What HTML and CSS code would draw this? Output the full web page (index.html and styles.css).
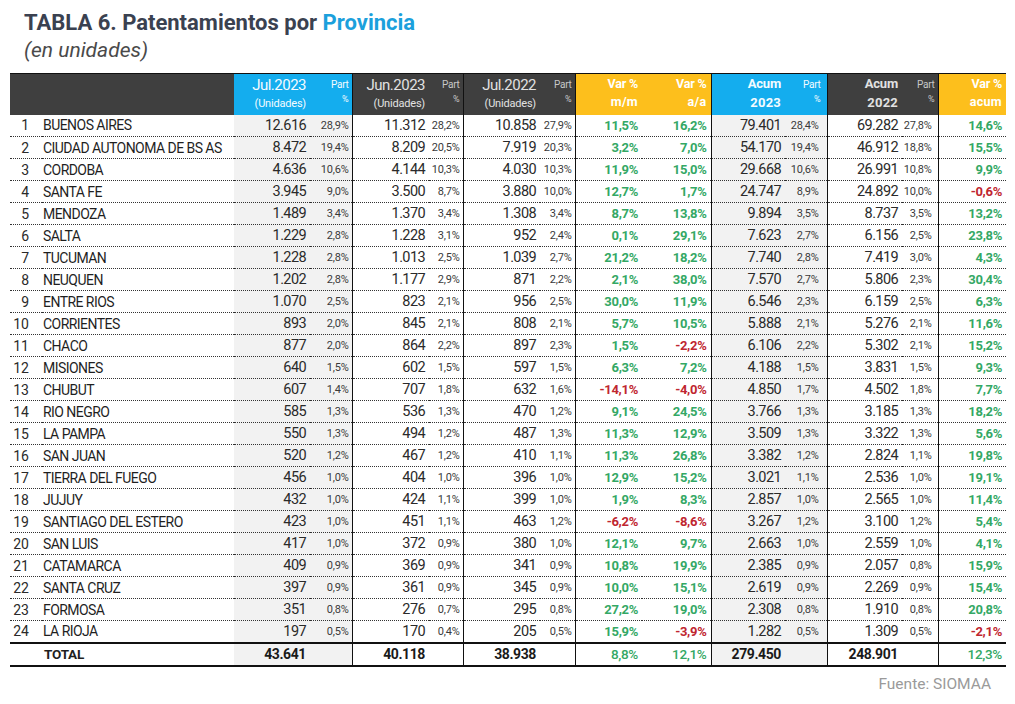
FILE: index.html
```html
<!DOCTYPE html>
<html lang="es">
<head>
<meta charset="utf-8">
<title>TABLA 6. Patentamientos por Provincia</title>
<link rel="stylesheet" href="styles.css">
</head>
<body>
<div class="page">
  <header class="heading">
    <h1 class="title">TABLA 6. Patentamientos por <span class="accent">Provincia</span></h1>
    <p class="subtitle">(en unidades)</p>
  </header>
  <table class="grid">
    <colgroup>
      <col class="c-idx"><col class="c-name">
      <col class="c-v1"><col class="c-p1">
      <col class="c-v2"><col class="c-p2">
      <col class="c-v3"><col class="c-p3">
      <col class="c-mm"><col class="c-aa">
      <col class="c-v4"><col class="c-p4">
      <col class="c-v5"><col class="c-p5">
      <col class="c-ac">
    </colgroup>
    <thead>
      <tr>
        <th class="hd dark"></th>
        <th class="hd dark"></th>
        <th class="hd blue val"><div class="l1">Jul.2023</div><div class="l2">(Unidades)</div></th>
        <th class="hd blue part"><div class="p1">Part</div><div class="p2">%</div></th>
        <th class="hd dark val sep"><div class="l1">Jun.2023</div><div class="l2">(Unidades)</div></th>
        <th class="hd dark part"><div class="p1">Part</div><div class="p2">%</div></th>
        <th class="hd dark val sep"><div class="l1">Jul.2022</div><div class="l2">(Unidades)</div></th>
        <th class="hd dark part"><div class="p1">Part</div><div class="p2">%</div></th>
        <th class="hd yellow var sep"><div class="b1">Var %</div><div class="b2">m/m</div></th>
        <th class="hd yellow var"><div class="b1">Var %</div><div class="b2">a/a</div></th>
        <th class="hd blue val acum sep"><div class="a1">Acum</div><div class="a2">2023</div></th>
        <th class="hd blue part pa4"><div class="p1">Part</div><div class="p2">%</div></th>
        <th class="hd dark val acum sep"><div class="a1">Acum</div><div class="a2">2022</div></th>
        <th class="hd dark part pa5"><div class="p1">Part</div><div class="p2">%</div></th>
        <th class="hd yellow var sep"><div class="b1">Var %</div><div class="b2">acum</div></th>
      </tr>
    </thead>
    <tbody>
      <tr><td class="idx">1</td><td class="name">BUENOS AIRES</td><td class="num g">12.616</td><td class="pc g">28,9%</td><td class="num sep">11.312</td><td class="pc">28,2%</td><td class="num sep">10.858</td><td class="pc">27,9%</td><td class="vr up sep">11,5%</td><td class="vr up">16,2%</td><td class="num g sep">79.401</td><td class="pc g pa4">28,4%</td><td class="num sep">69.282</td><td class="pc pa5">27,8%</td><td class="vr up sep">14,6%</td></tr>
      <tr><td class="idx">2</td><td class="name">CIUDAD AUTONOMA DE BS AS</td><td class="num g">8.472</td><td class="pc g">19,4%</td><td class="num sep">8.209</td><td class="pc">20,5%</td><td class="num sep">7.919</td><td class="pc">20,3%</td><td class="vr up sep">3,2%</td><td class="vr up">7,0%</td><td class="num g sep">54.170</td><td class="pc g pa4">19,4%</td><td class="num sep">46.912</td><td class="pc pa5">18,8%</td><td class="vr up sep">15,5%</td></tr>
      <tr><td class="idx">3</td><td class="name">CORDOBA</td><td class="num g">4.636</td><td class="pc g">10,6%</td><td class="num sep">4.144</td><td class="pc">10,3%</td><td class="num sep">4.030</td><td class="pc">10,3%</td><td class="vr up sep">11,9%</td><td class="vr up">15,0%</td><td class="num g sep">29.668</td><td class="pc g pa4">10,6%</td><td class="num sep">26.991</td><td class="pc pa5">10,8%</td><td class="vr up sep">9,9%</td></tr>
      <tr><td class="idx">4</td><td class="name">SANTA FE</td><td class="num g">3.945</td><td class="pc g">9,0%</td><td class="num sep">3.500</td><td class="pc">8,7%</td><td class="num sep">3.880</td><td class="pc">10,0%</td><td class="vr up sep">12,7%</td><td class="vr up">1,7%</td><td class="num g sep">24.747</td><td class="pc g pa4">8,9%</td><td class="num sep">24.892</td><td class="pc pa5">10,0%</td><td class="vr down sep">-0,6%</td></tr>
      <tr><td class="idx">5</td><td class="name">MENDOZA</td><td class="num g">1.489</td><td class="pc g">3,4%</td><td class="num sep">1.370</td><td class="pc">3,4%</td><td class="num sep">1.308</td><td class="pc">3,4%</td><td class="vr up sep">8,7%</td><td class="vr up">13,8%</td><td class="num g sep">9.894</td><td class="pc g pa4">3,5%</td><td class="num sep">8.737</td><td class="pc pa5">3,5%</td><td class="vr up sep">13,2%</td></tr>
      <tr><td class="idx">6</td><td class="name">SALTA</td><td class="num g">1.229</td><td class="pc g">2,8%</td><td class="num sep">1.228</td><td class="pc">3,1%</td><td class="num sep">952</td><td class="pc">2,4%</td><td class="vr up sep">0,1%</td><td class="vr up">29,1%</td><td class="num g sep">7.623</td><td class="pc g pa4">2,7%</td><td class="num sep">6.156</td><td class="pc pa5">2,5%</td><td class="vr up sep">23,8%</td></tr>
      <tr><td class="idx">7</td><td class="name">TUCUMAN</td><td class="num g">1.228</td><td class="pc g">2,8%</td><td class="num sep">1.013</td><td class="pc">2,5%</td><td class="num sep">1.039</td><td class="pc">2,7%</td><td class="vr up sep">21,2%</td><td class="vr up">18,2%</td><td class="num g sep">7.740</td><td class="pc g pa4">2,8%</td><td class="num sep">7.419</td><td class="pc pa5">3,0%</td><td class="vr up sep">4,3%</td></tr>
      <tr><td class="idx">8</td><td class="name">NEUQUEN</td><td class="num g">1.202</td><td class="pc g">2,8%</td><td class="num sep">1.177</td><td class="pc">2,9%</td><td class="num sep">871</td><td class="pc">2,2%</td><td class="vr up sep">2,1%</td><td class="vr up">38,0%</td><td class="num g sep">7.570</td><td class="pc g pa4">2,7%</td><td class="num sep">5.806</td><td class="pc pa5">2,3%</td><td class="vr up sep">30,4%</td></tr>
      <tr><td class="idx">9</td><td class="name">ENTRE RIOS</td><td class="num g">1.070</td><td class="pc g">2,5%</td><td class="num sep">823</td><td class="pc">2,1%</td><td class="num sep">956</td><td class="pc">2,5%</td><td class="vr up sep">30,0%</td><td class="vr up">11,9%</td><td class="num g sep">6.546</td><td class="pc g pa4">2,3%</td><td class="num sep">6.159</td><td class="pc pa5">2,5%</td><td class="vr up sep">6,3%</td></tr>
      <tr><td class="idx">10</td><td class="name">CORRIENTES</td><td class="num g">893</td><td class="pc g">2,0%</td><td class="num sep">845</td><td class="pc">2,1%</td><td class="num sep">808</td><td class="pc">2,1%</td><td class="vr up sep">5,7%</td><td class="vr up">10,5%</td><td class="num g sep">5.888</td><td class="pc g pa4">2,1%</td><td class="num sep">5.276</td><td class="pc pa5">2,1%</td><td class="vr up sep">11,6%</td></tr>
      <tr><td class="idx">11</td><td class="name">CHACO</td><td class="num g">877</td><td class="pc g">2,0%</td><td class="num sep">864</td><td class="pc">2,2%</td><td class="num sep">897</td><td class="pc">2,3%</td><td class="vr up sep">1,5%</td><td class="vr down">-2,2%</td><td class="num g sep">6.106</td><td class="pc g pa4">2,2%</td><td class="num sep">5.302</td><td class="pc pa5">2,1%</td><td class="vr up sep">15,2%</td></tr>
      <tr><td class="idx">12</td><td class="name">MISIONES</td><td class="num g">640</td><td class="pc g">1,5%</td><td class="num sep">602</td><td class="pc">1,5%</td><td class="num sep">597</td><td class="pc">1,5%</td><td class="vr up sep">6,3%</td><td class="vr up">7,2%</td><td class="num g sep">4.188</td><td class="pc g pa4">1,5%</td><td class="num sep">3.831</td><td class="pc pa5">1,5%</td><td class="vr up sep">9,3%</td></tr>
      <tr><td class="idx">13</td><td class="name">CHUBUT</td><td class="num g">607</td><td class="pc g">1,4%</td><td class="num sep">707</td><td class="pc">1,8%</td><td class="num sep">632</td><td class="pc">1,6%</td><td class="vr down sep">-14,1%</td><td class="vr down">-4,0%</td><td class="num g sep">4.850</td><td class="pc g pa4">1,7%</td><td class="num sep">4.502</td><td class="pc pa5">1,8%</td><td class="vr up sep">7,7%</td></tr>
      <tr><td class="idx">14</td><td class="name">RIO NEGRO</td><td class="num g">585</td><td class="pc g">1,3%</td><td class="num sep">536</td><td class="pc">1,3%</td><td class="num sep">470</td><td class="pc">1,2%</td><td class="vr up sep">9,1%</td><td class="vr up">24,5%</td><td class="num g sep">3.766</td><td class="pc g pa4">1,3%</td><td class="num sep">3.185</td><td class="pc pa5">1,3%</td><td class="vr up sep">18,2%</td></tr>
      <tr><td class="idx">15</td><td class="name">LA PAMPA</td><td class="num g">550</td><td class="pc g">1,3%</td><td class="num sep">494</td><td class="pc">1,2%</td><td class="num sep">487</td><td class="pc">1,3%</td><td class="vr up sep">11,3%</td><td class="vr up">12,9%</td><td class="num g sep">3.509</td><td class="pc g pa4">1,3%</td><td class="num sep">3.322</td><td class="pc pa5">1,3%</td><td class="vr up sep">5,6%</td></tr>
      <tr><td class="idx">16</td><td class="name">SAN JUAN</td><td class="num g">520</td><td class="pc g">1,2%</td><td class="num sep">467</td><td class="pc">1,2%</td><td class="num sep">410</td><td class="pc">1,1%</td><td class="vr up sep">11,3%</td><td class="vr up">26,8%</td><td class="num g sep">3.382</td><td class="pc g pa4">1,2%</td><td class="num sep">2.824</td><td class="pc pa5">1,1%</td><td class="vr up sep">19,8%</td></tr>
      <tr><td class="idx">17</td><td class="name">TIERRA DEL FUEGO</td><td class="num g">456</td><td class="pc g">1,0%</td><td class="num sep">404</td><td class="pc">1,0%</td><td class="num sep">396</td><td class="pc">1,0%</td><td class="vr up sep">12,9%</td><td class="vr up">15,2%</td><td class="num g sep">3.021</td><td class="pc g pa4">1,1%</td><td class="num sep">2.536</td><td class="pc pa5">1,0%</td><td class="vr up sep">19,1%</td></tr>
      <tr><td class="idx">18</td><td class="name">JUJUY</td><td class="num g">432</td><td class="pc g">1,0%</td><td class="num sep">424</td><td class="pc">1,1%</td><td class="num sep">399</td><td class="pc">1,0%</td><td class="vr up sep">1,9%</td><td class="vr up">8,3%</td><td class="num g sep">2.857</td><td class="pc g pa4">1,0%</td><td class="num sep">2.565</td><td class="pc pa5">1,0%</td><td class="vr up sep">11,4%</td></tr>
      <tr><td class="idx">19</td><td class="name">SANTIAGO DEL ESTERO</td><td class="num g">423</td><td class="pc g">1,0%</td><td class="num sep">451</td><td class="pc">1,1%</td><td class="num sep">463</td><td class="pc">1,2%</td><td class="vr down sep">-6,2%</td><td class="vr down">-8,6%</td><td class="num g sep">3.267</td><td class="pc g pa4">1,2%</td><td class="num sep">3.100</td><td class="pc pa5">1,2%</td><td class="vr up sep">5,4%</td></tr>
      <tr><td class="idx">20</td><td class="name">SAN LUIS</td><td class="num g">417</td><td class="pc g">1,0%</td><td class="num sep">372</td><td class="pc">0,9%</td><td class="num sep">380</td><td class="pc">1,0%</td><td class="vr up sep">12,1%</td><td class="vr up">9,7%</td><td class="num g sep">2.663</td><td class="pc g pa4">1,0%</td><td class="num sep">2.559</td><td class="pc pa5">1,0%</td><td class="vr up sep">4,1%</td></tr>
      <tr><td class="idx">21</td><td class="name">CATAMARCA</td><td class="num g">409</td><td class="pc g">0,9%</td><td class="num sep">369</td><td class="pc">0,9%</td><td class="num sep">341</td><td class="pc">0,9%</td><td class="vr up sep">10,8%</td><td class="vr up">19,9%</td><td class="num g sep">2.385</td><td class="pc g pa4">0,9%</td><td class="num sep">2.057</td><td class="pc pa5">0,8%</td><td class="vr up sep">15,9%</td></tr>
      <tr><td class="idx">22</td><td class="name">SANTA CRUZ</td><td class="num g">397</td><td class="pc g">0,9%</td><td class="num sep">361</td><td class="pc">0,9%</td><td class="num sep">345</td><td class="pc">0,9%</td><td class="vr up sep">10,0%</td><td class="vr up">15,1%</td><td class="num g sep">2.619</td><td class="pc g pa4">0,9%</td><td class="num sep">2.269</td><td class="pc pa5">0,9%</td><td class="vr up sep">15,4%</td></tr>
      <tr><td class="idx">23</td><td class="name">FORMOSA</td><td class="num g">351</td><td class="pc g">0,8%</td><td class="num sep">276</td><td class="pc">0,7%</td><td class="num sep">295</td><td class="pc">0,8%</td><td class="vr up sep">27,2%</td><td class="vr up">19,0%</td><td class="num g sep">2.308</td><td class="pc g pa4">0,8%</td><td class="num sep">1.910</td><td class="pc pa5">0,8%</td><td class="vr up sep">20,8%</td></tr>
      <tr class="last"><td class="idx">24</td><td class="name">LA RIOJA</td><td class="num g">197</td><td class="pc g">0,5%</td><td class="num sep">170</td><td class="pc">0,4%</td><td class="num sep">205</td><td class="pc">0,5%</td><td class="vr up sep">15,9%</td><td class="vr down">-3,9%</td><td class="num g sep">1.282</td><td class="pc g pa4">0,5%</td><td class="num sep">1.309</td><td class="pc pa5">0,5%</td><td class="vr down sep">-2,1%</td></tr>
    </tbody>
    <tfoot>
      <tr class="total"><td class="idx"></td><td class="name">TOTAL</td><td class="num g">43.641</td><td class="pc g"></td><td class="num sep">40.118</td><td class="pc"></td><td class="num sep">38.938</td><td class="pc"></td><td class="vr up sep">8,8%</td><td class="vr up">12,1%</td><td class="num g sep">279.450</td><td class="pc g"></td><td class="num sep">248.901</td><td class="pc"></td><td class="vr up sep">12,3%</td></tr>
    </tfoot>
  </table>
  <p class="source">Fuente: SIOMAA</p>
</div>
</body>
</html>
```
FILE: styles.css
```css
* { box-sizing: border-box; }
html, body { margin: 0; padding: 0; background: #fff; }
body { font-family: Roboto, "Liberation Sans", sans-serif; color: #222; }

.page { width: 1015px; padding: 10px 9px 0 10px; }

.heading { padding-left: 14px; }
.title {
  margin: 0;
  font-size: 22px;
  line-height: 26px;
  font-weight: 700;
  color: #3a4150;
  letter-spacing: 0;
}
.title .accent { color: #1ba0dc; }
.subtitle {
  margin: 1px 0 0;
  font-size: 21px;
  line-height: 26px;
  font-style: italic;
  color: #4a4a4a;
}

.grid {
  margin-top: 10px;
  width: 996px;
  border-collapse: collapse;
  table-layout: fixed;
}
.c-idx { width: 32px; }
.c-name { width: 192px; }
.c-v1 { width: 76px; }
.c-p1 { width: 42px; }
.c-v2 { width: 77px; }
.c-p2 { width: 34px; }
.c-v3 { width: 77px; }
.c-p3 { width: 35px; }
.c-mm { width: 67px; }
.c-aa { width: 69px; }
.c-v4 { width: 74px; }
.c-p4 { width: 42px; }
.c-v5 { width: 75px; }
.c-p5 { width: 36px; }
.c-ac { width: 68px; }

/* header */
.hd {
  height: 41px;
  padding: 0 4px 0 0;
  vertical-align: top;
  text-align: right;
  font-weight: 400;
  border-top: 1px solid #111;
}
.dark { background: #3f3f3f; color: #e2e2e2; }
.blue { background: #14adee; color: #f4fbff; }
.yellow { background: #fdbf1c; color: #fff; }
.hd.sep { border-left: 1px solid #111; }
.hd.part { padding-right: 3px; }
.hd.pa4 { padding-right: 6px; }

.l1 { font-size: 15px; line-height: 20px; letter-spacing: -0.5px; padding-top: 1px; }
.l2 { font-size: 11px; line-height: 18px; letter-spacing: -0.2px; }
.p1 { font-size: 10px; line-height: 18px; padding-top: 2px; letter-spacing: -0.3px; }
.p2 { font-size: 9px; line-height: 10px; }
.dark .p1, .dark .p2 { color: #c8c8c8; }
.b1, .b2 { font-size: 12.5px; font-weight: 700; letter-spacing: -0.2px; }
.b1 { line-height: 18px; padding-top: 1px; }
.b2 { line-height: 18px; letter-spacing: 0.3px; }
.a1, .a2 { font-size: 13px; font-weight: 700; letter-spacing: -0.2px; }
.a1 { line-height: 18px; padding-top: 1px; }
.a2 { line-height: 20px; letter-spacing: 0.2px; }

/* body cells */
tbody td, tfoot td {
  height: 22px;
  padding: 0 4px 0 0;
  white-space: nowrap;
  vertical-align: middle;
  border-bottom: 1px dotted #333;
}
tbody tr.last td { border-bottom: none; }
td.sep { border-left: 1px solid #111; }
td.g { background: #f2f2f2; }

td.idx {
  text-align: right;
  padding-right: 13px;
  font-size: 14px;
  color: #2a2a2a;
}
td.name {
  text-align: left;
  padding-left: 1px;
  font-size: 14px;
  letter-spacing: -0.55px;
  color: #1f1f1f;
}
.num {
  text-align: right;
  font-size: 14.5px;
  letter-spacing: -0.6px;
  color: #2a2a2a;
}
td.pc {
  text-align: right;
  font-size: 11px;
  letter-spacing: -0.2px;
  color: #3a3a3a;
  padding-right: 3px;
}
td.pc.pa4 { padding-right: 8px; }
td.pc.pa5 { padding-right: 6px; }
.vr {
  text-align: right;
  font-size: 13px;
  font-weight: 700;
  letter-spacing: -0.3px;
}
.up { color: #34a865; }
.down { color: #bf2630; }

tfoot tr.total td {
  border-top: 2px solid #111;
  border-bottom: 2px solid #111;
  height: 23px;
}
tfoot td.name { font-weight: 700; font-size: 13.5px; letter-spacing: -0.2px; padding-left: 2px; }
tfoot .num { font-weight: 700; font-size: 14px; letter-spacing: -0.4px; color: #1a1a1a; }
tfoot .vr { font-weight: 500; font-size: 13.5px; }

.source {
  margin: 8px 0 0;
  padding-right: 15px;
  text-align: right;
  font-size: 15.5px;
  color: #9a9a9a;
}
```
